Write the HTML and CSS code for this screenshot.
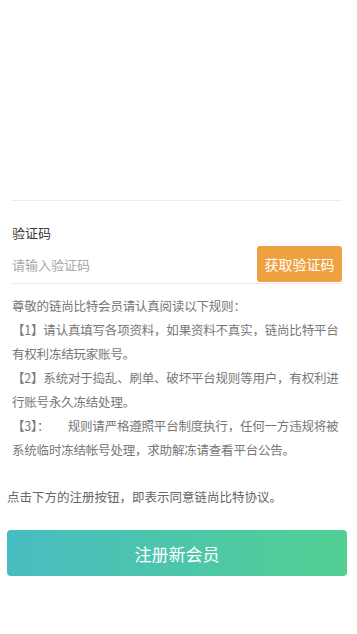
FILE: index.html
```html
<!DOCTYPE html>
<html lang="zh-CN">
<head>
    <meta charset="UTF-8">
    <meta name="viewport" content="width=device-width, initial-scale=1.0">
    <title>注册新会员</title>
    <link rel="stylesheet" href="styles.css">
</head>
<body>
    <div class="page">
        <div class="form">
            <div class="divider"></div>
            <div class="field">
                <div class="label">验证码</div>
                <div class="input-row">
                    <input class="input" type="text" placeholder="请输入验证码">
                    <button class="code-btn">获取验证码</button>
                </div>
            </div>
            <div class="rules">
                <p>尊敬的链尚比特会员请认真阅读以下规则：</p>
                <p>【1】请认真填写各项资料，如果资料不真实，链尚比特平台有权利冻结玩家账号。</p>
                <p>【2】系统对于捣乱、刷单、破坏平台规则等用户，有权利进行账号永久冻结处理。</p>
                <p>【3】：&emsp;&ensp;规则请严格遵照平台制度执行，任何一方违规将被系统临时冻结帐号处理，求助解冻请查看平台公告。</p>
            </div>
        </div>
        <p class="agree">点击下方的注册按钮，即表示同意链尚比特协议。</p>
        <button class="submit">注册新会员</button>
    </div>
</body>
</html>
```

FILE: styles.css
```css
* {
    margin: 0;
    padding: 0;
    box-sizing: border-box;
    font-family: "Noto Sans CJK SC", "Noto Sans", sans-serif;
}

body {
    background: #ffffff;
}

.page {
    padding: 200px 10px 0 7px;
}

.form {
    padding: 0 5px;
}

.divider {
    height: 1px;
    background: #ececec;
}

.field {
    margin-top: 22px;
}

.label {
    font-size: 13px;
    line-height: 20px;
    color: #3a3a3a;
}

.input-row {
    display: flex;
    align-items: center;
    margin-top: 3px;
    border-bottom: 1px solid #ececec;
    padding-bottom: 1px;
}

.input {
    flex: 1;
    min-width: 0;
    border: none;
    outline: none;
    font-size: 13px;
    color: #333;
    height: 36px;
    background: transparent;
}

.input::placeholder {
    color: #a8a8a8;
}

.code-btn {
    width: 85px;
    height: 36px;
    border: none;
    border-radius: 3px;
    background: #efa13f;
    color: #fff;
    font-size: 14px;
}

.rules {
    margin-top: 10px;
}

.rules p {
    font-size: 12.5px;
    line-height: 24px;
    letter-spacing: -0.2px;
    color: #777;
}

.agree {
    margin-top: 23px;
    font-size: 12.5px;
    line-height: 24px;
    color: #666;
}

.submit {
    display: block;
    width: 100%;
    height: 46px;
    margin-top: 21px;
    border: none;
    border-radius: 4px;
    background: linear-gradient(to right, #47bcc2, #52d092);
    color: #fff;
    font-size: 17px;
}
```
